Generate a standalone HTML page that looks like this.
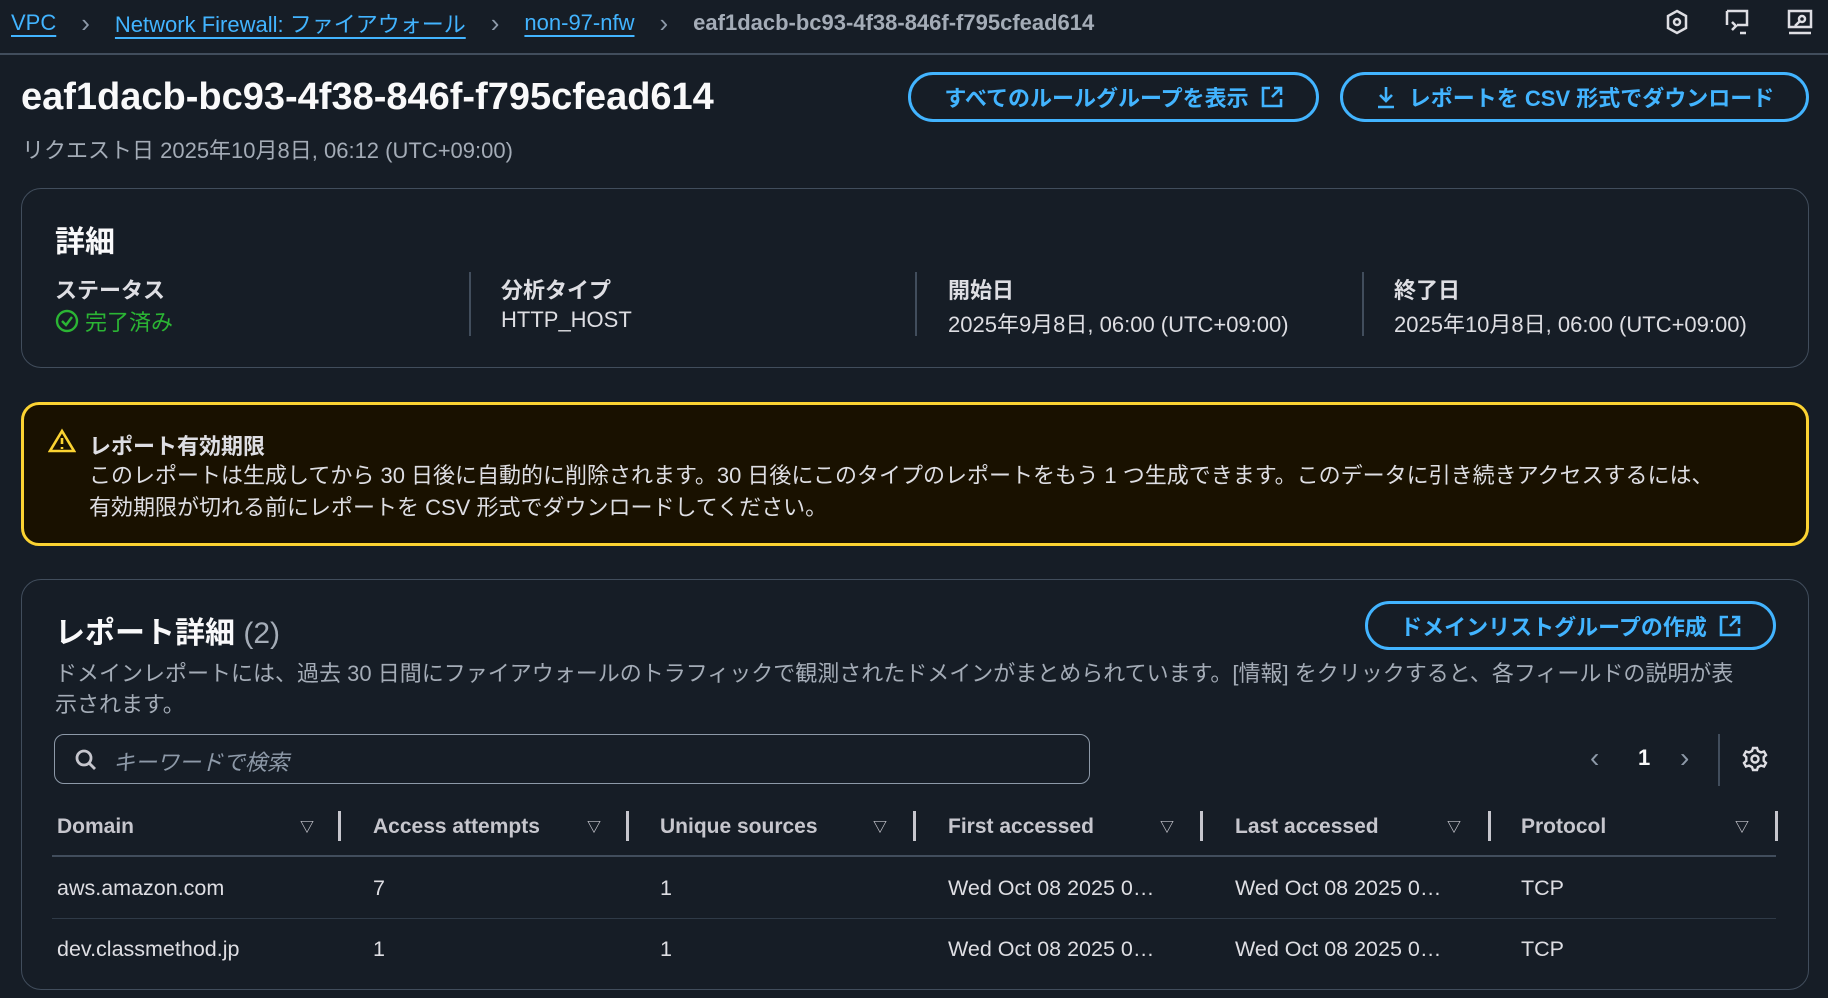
<!DOCTYPE html>
<html><head><meta charset="utf-8"><style>
*{box-sizing:border-box;margin:0;padding:0}
body{width:1828px;height:998px;overflow:hidden;background:#161d26;color:#dedee3;font-family:"Liberation Sans","Noto Sans CJK JP",sans-serif;font-size:22px;position:relative}
.a{position:absolute;white-space:nowrap}
.lnk{color:#42b4ff;text-decoration:underline;text-underline-offset:5px}
.bcrow{position:absolute;left:11px;top:7px;font-size:22px;display:flex;align-items:center;white-space:nowrap}
.sep{color:#8d99a8;margin:0 25px;font-size:26px;line-height:1}
.btn{position:absolute;border:3px solid #42b4ff;border-radius:26px;color:#42b4ff;font-weight:bold;font-size:22px;display:flex;align-items:center;justify-content:center;gap:12px}
.panel{position:absolute;border:1.5px solid #414d5c;border-radius:20px}
.lbl{font-weight:bold;font-size:22px;color:#dedee3}
.vd{position:absolute;width:1.5px;background:#414d5c}
.th{font-weight:bold;color:#c6c6cd;font-size:21px}
.tri{position:absolute;font-size:14px;color:#c6c6cd;font-weight:bold}
.cd{position:absolute;width:3px;height:30px;background:#c6c6cd;top:811px}
.td{font-size:21.5px}
</style></head><body>
<div class="bcrow"><span class="lnk">VPC</span><span class="sep">&#x203A;</span><span class="lnk">Network Firewall: ファイアウォール</span><span class="sep">&#x203A;</span><span class="lnk">non-97-nfw</span><span class="sep">&#x203A;</span><span style="color:#a4acb7;font-weight:bold">eaf1dacb-bc93-4f38-846f-f795cfead614</span></div>
<svg class="a" style="left:1664px;top:9px" width="26" height="26" viewBox="0 0 26 26" fill="none" stroke="#dedee3" stroke-width="2.5"><path d="M13 2l9 5v12l-9 5-9-5V7z"/><circle cx="13" cy="13" r="3"/></svg>
<svg class="a" style="left:1724px;top:8px" width="28" height="28" viewBox="0 0 28 28" fill="none" stroke="#dedee3" stroke-width="2.5"><path d="M3 3h20v14H13M3 3v14"/><path d="M8 14l4 4-4 4M16 25h6"/></svg>
<svg class="a" style="left:1786px;top:8px" width="28" height="28" viewBox="0 0 28 28" fill="none" stroke="#dedee3" stroke-width="2.5"><path d="M3 3h22v16H3zM3 25h22"/><circle cx="16" cy="11" r="3"/><path d="M14 13l-5 5"/></svg>
<div class="a" style="left:0;top:53px;width:1828px;height:1.5px;background:#414d5c"></div>

<div class="a" style="left:21px;top:76px;font-size:38px;font-weight:bold;color:#f9f9fa">eaf1dacb-bc93-4f38-846f-f795cfead614</div>
<div class="a" style="left:22px;top:133px;color:#a4acb7">リクエスト日 2025年10月8日, 06:12 (UTC+09:00)</div>
<div class="btn" style="left:908px;top:72px;width:411px;height:50px">すべてのルールグループを表示 <svg width="22" height="22" viewBox="0 0 22 22" fill="none" stroke="#42b4ff" stroke-width="2.6"><path d="M9 2H2v18h18v-7M13 2h7v7M20 2l-9 9"/></svg></div>
<div class="btn" style="left:1340px;top:72px;width:469px;height:50px"><svg width="22" height="24" viewBox="0 0 22 24" fill="none" stroke="#42b4ff" stroke-width="2.6"><path d="M11 2v14M5 10l6 6 6-6M3 22h16"/></svg>レポートを CSV 形式でダウンロード</div>

<div class="panel" style="left:21px;top:188px;width:1788px;height:180px"></div>
<div class="a" style="left:55px;top:217px;font-size:30px;font-weight:bold;color:#f9f9fa">詳細</div>
<div class="a lbl" style="left:55px;top:273px">ステータス</div>
<div class="a" style="left:55px;top:305px;color:#2bb534;display:flex;align-items:center;gap:6px"><svg width="24" height="24" viewBox="0 0 24 24" fill="none" stroke="#2bb534" stroke-width="2.4"><circle cx="12" cy="12" r="10"/><path d="M7 12l4 4 6-8"/></svg>完了済み</div>
<div class="vd" style="left:469px;top:272px;height:64px"></div>
<div class="a lbl" style="left:501px;top:273px">分析タイプ</div>
<div class="a" style="left:501px;top:307px">HTTP_HOST</div>
<div class="vd" style="left:915px;top:272px;height:64px"></div>
<div class="a lbl" style="left:948px;top:273px">開始日</div>
<div class="a" style="left:948px;top:307px">2025年9月8日, 06:00 (UTC+09:00)</div>
<div class="vd" style="left:1362px;top:272px;height:64px"></div>
<div class="a lbl" style="left:1394px;top:273px">終了日</div>
<div class="a" style="left:1394px;top:307px">2025年10月8日, 06:00 (UTC+09:00)</div>

<div class="a" style="left:21px;top:402px;width:1788px;height:144px;background:#191100;border:3px solid #fbd332;border-radius:18px"></div>
<svg class="a" style="left:48px;top:428px" width="28" height="26" viewBox="0 0 28 26" fill="none" stroke="#fbd332" stroke-width="2.6"><path d="M14 3L2 23h24z"/><path d="M14 10v6M14 19v2"/></svg>
<div class="a lbl" style="left:89px;top:429px">レポート有効期限</div>
<div class="a" style="left:89px;top:460px;line-height:32px;color:#dedee3">このレポートは生成してから 30 日後に自動的に削除されます。30 日後にこのタイプのレポートをもう 1 つ生成できます。このデータに引き続きアクセスするには、<br>有効期限が切れる前にレポートを CSV 形式でダウンロードしてください。</div>

<div class="panel" style="left:21px;top:579px;width:1788px;height:411px"></div>
<div class="a" style="left:55px;top:608px;font-size:30px;font-weight:bold;color:#f9f9fa">レポート詳細 <span style="font-weight:normal;color:#a4acb7">(2)</span></div>
<div class="btn" style="left:1365px;top:601px;width:411px;height:49px">ドメインリストグループの作成 <svg width="22" height="22" viewBox="0 0 22 22" fill="none" stroke="#42b4ff" stroke-width="2.6"><path d="M9 2H2v18h18v-7M13 2h7v7M20 2l-9 9"/></svg></div>
<div class="a" style="left:55px;top:658px;line-height:31px;color:#a4acb7">ドメインレポートには、過去 30 日間にファイアウォールのトラフィックで観測されたドメインがまとめられています。[情報] をクリックすると、各フィールドの説明が表<br>示されます。</div>
<div class="a" style="left:54px;top:734px;width:1036px;height:50px;border:1.5px solid #8d99a8;border-radius:10px"></div>
<svg class="a" style="left:74px;top:748px" width="24" height="24" viewBox="0 0 24 24" fill="none" stroke="#c6c6cd" stroke-width="2.8"><circle cx="10" cy="10" r="7"/><path d="M15 15l6 6"/></svg>
<div class="a" style="left:113px;top:745px;color:#8d99a8;font-style:italic">キーワードで検索</div>
<div class="a" style="left:1590px;top:742px;font-size:28px;color:#8d99a8">&#x2039;</div>
<div class="a" style="left:1638px;top:745px;font-weight:bold;color:#f9f9fa">1</div>
<div class="a" style="left:1680px;top:742px;font-size:28px;color:#8d99a8">&#x203A;</div>
<div class="vd" style="left:1718px;top:734px;height:52px"></div>
<svg class="a" style="left:1742px;top:746px" width="26" height="26" viewBox="0 0 26 26" fill="none" stroke="#dedee3" stroke-width="2.4"><circle cx="13" cy="13" r="3.5"/><path d="M11 2h4l1 3 3 1.5 3-1 2 3.5-2.3 2.2v3.6L24 17l-2 3.5-3-1-3 1.5-1 3h-4l-1-3-3-1.5-3 1L2 17l2.3-2.2v-3.6L2 9l2-3.5 3 1L10 5z"/></svg>

<div class="a th" style="left:57px;top:815px">Domain</div>
<div class="a th" style="left:373px;top:815px">Access attempts</div>
<div class="a th" style="left:660px;top:815px">Unique sources</div>
<div class="a th" style="left:948px;top:815px">First accessed</div>
<div class="a th" style="left:1235px;top:815px">Last accessed</div>
<div class="a th" style="left:1521px;top:815px">Protocol</div>
<div class="tri" style="left:300px;top:817px">&#x25BD;</div>
<div class="tri" style="left:587px;top:817px">&#x25BD;</div>
<div class="tri" style="left:873px;top:817px">&#x25BD;</div>
<div class="tri" style="left:1160px;top:817px">&#x25BD;</div>
<div class="tri" style="left:1447px;top:817px">&#x25BD;</div>
<div class="tri" style="left:1735px;top:817px">&#x25BD;</div>
<div class="cd" style="left:338px"></div><div class="cd" style="left:626px"></div><div class="cd" style="left:913px"></div><div class="cd" style="left:1200px"></div><div class="cd" style="left:1488px"></div><div class="cd" style="left:1775px"></div>
<div class="a" style="left:52px;top:855px;width:1724px;height:1.5px;background:#414d5c"></div>
<div class="a" style="left:52px;top:918px;width:1724px;height:1px;background:#2f3a47"></div>
<div class="a td" style="left:57px;top:876px">aws.amazon.com</div>
<div class="a td" style="left:373px;top:876px">7</div>
<div class="a td" style="left:660px;top:876px">1</div>
<div class="a td" style="left:948px;top:876px">Wed Oct 08 2025 0…</div>
<div class="a td" style="left:1235px;top:876px">Wed Oct 08 2025 0…</div>
<div class="a td" style="left:1521px;top:876px">TCP</div>
<div class="a td" style="left:57px;top:937px">dev.classmethod.jp</div>
<div class="a td" style="left:373px;top:937px">1</div>
<div class="a td" style="left:660px;top:937px">1</div>
<div class="a td" style="left:948px;top:937px">Wed Oct 08 2025 0…</div>
<div class="a td" style="left:1235px;top:937px">Wed Oct 08 2025 0…</div>
<div class="a td" style="left:1521px;top:937px">TCP</div>
</body></html>
